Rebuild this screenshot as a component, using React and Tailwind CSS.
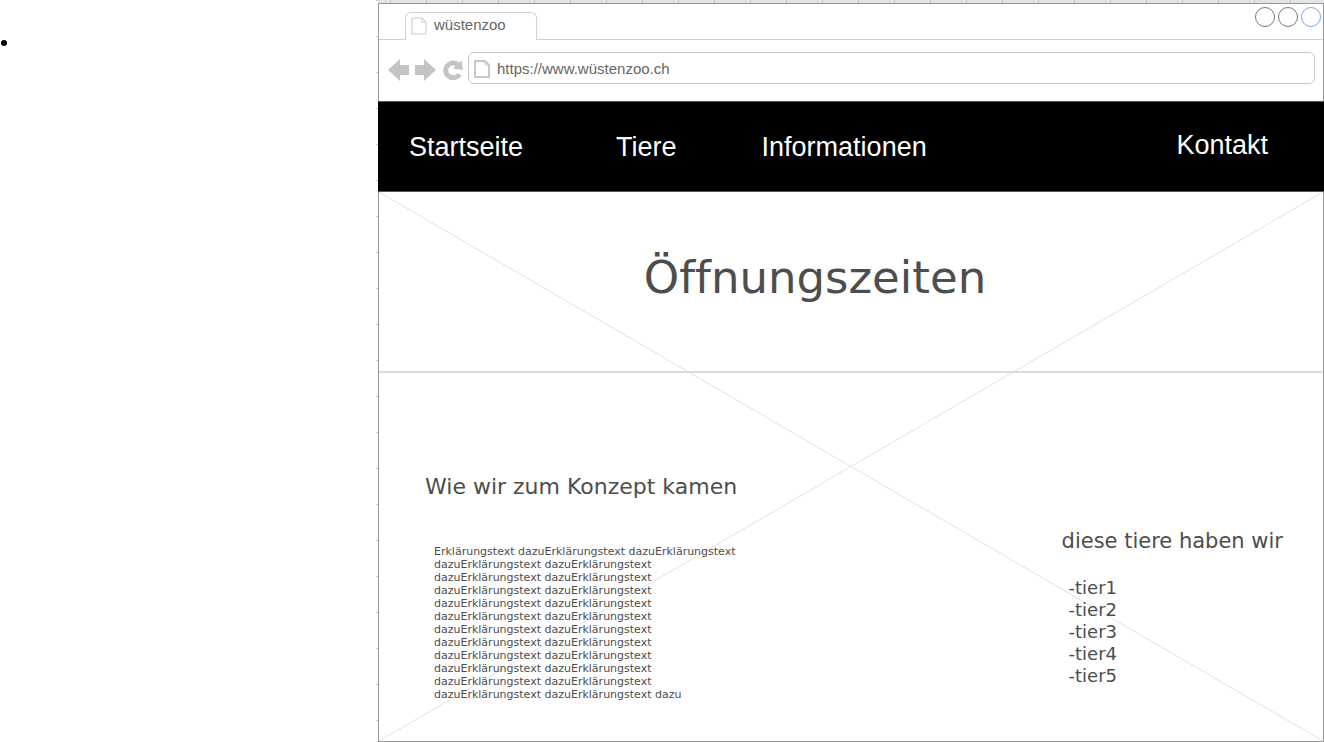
const EXPLANATION = 'Erklärungstext dazu'.repeat(25)

const NAV_LINKS = [
  { label: 'Startseite', place: 'ml-[31px]' },
  { label: 'Tiere', place: 'ml-[93px]' },
  { label: 'Informationen', place: 'ml-[85px]' },
  { label: 'Kontakt', place: 'ml-auto mr-14 pb-1' },
]

const ANIMALS = ['tier1', 'tier2', 'tier3', 'tier4', 'tier5']

function PageIcon({ className, strokeWidth }) {
  return (
    <svg className={className} viewBox="0 0 16 18" fill="none" stroke="#c8c8c8" strokeWidth={strokeWidth} aria-hidden="true">
      <path d="M1 1H11L15 5V17H1Z" />
      <path d="M11 1V5H15" strokeWidth="1" />
    </svg>
  )
}

function WindowButton({ label, color }) {
  return (
    <button type="button" aria-label={label} className={`size-5 rounded-full border bg-white ${color}`} />
  )
}

function TabBar() {
  return (
    <div className="flex h-9 justify-between">
      <div className="flex flex-1 items-end">
        <div className="w-[26px] border-b border-[#d0d0d0]" />
        <button
          type="button"
          className="flex h-7 w-[132px] items-center gap-[7px] rounded-t-md border border-b-0 border-[#d0d0d0] pb-1 pl-[5px] text-[15px] leading-5 text-[#666]"
        >
          <PageIcon className="mt-[3px] h-[18px] w-4" strokeWidth="1" />
          wüstenzoo
        </button>
        <div className="flex-1 border-b border-[#d0d0d0]" />
      </div>
      <div className="flex items-start gap-[3px] border-b border-[#d0d0d0] pt-[3px] pr-[2px]">
        <WindowButton label="Minimieren" color="border-[#777]" />
        <WindowButton label="Maximieren" color="border-[#777]" />
        <WindowButton label="Schliessen" color="border-[#7ba6f7]" />
      </div>
    </div>
  )
}

function AddressBar() {
  return (
    <div className="flex items-center pt-3 pr-2 pb-[17px] pl-[9px]">
      <button type="button" aria-label="Zurück" className="pt-[3px]">
        <svg className="h-[22px] w-[21px]" viewBox="0 0 21 22" fill="#c4c4c4" aria-hidden="true">
          <path d="M0 11L12 0V6H21V16H12V22Z" />
        </svg>
      </button>
      <button type="button" aria-label="Vorwärts" className="ml-[6px] pt-[3px]">
        <svg className="h-[22px] w-[21px]" viewBox="0 0 21 22" fill="#c4c4c4" aria-hidden="true">
          <path d="M21 11L9 0V6H0V16H9V22Z" />
        </svg>
      </button>
      <button type="button" aria-label="Neu laden" className="ml-[7px] pt-[3px]">
        <svg className="h-5 w-5" viewBox="0 0 20 20" aria-hidden="true">
          <path d="M16.5 14.2A7.400 7.400 0 1 1 14.400 4.300" fill="none" stroke="#c4c4c4" strokeWidth="5" />
          <path d="M18.500 0.500L20 10L9.800 8.500Z" fill="#c4c4c4" />
        </svg>
      </button>
      <label className="ml-[5px] flex h-8 flex-1 items-center gap-[7px] rounded-md border border-[#c8c8c8] pt-px pl-[5px]">
        <PageIcon className="h-[18px] w-4" strokeWidth="2" />
        <input
          type="text"
          aria-label="Adresse"
          defaultValue="https://www.wüstenzoo.ch"
          className="min-w-0 flex-1 bg-transparent text-[15px] leading-5 text-[#666] outline-none"
        />
      </label>
    </div>
  )
}

export default function App() {
  return (
    <div className="flex min-h-screen items-stretch bg-white font-['Liberation_Sans',Arial,sans-serif]">
      <aside className="w-[376px] shrink-0 pt-10">
        <div className="ml-px size-[6px] rounded-full bg-black" />
      </aside>
      <div className="w-[2px] shrink-0 bg-[repeating-linear-gradient(to_bottom,#d0d0d0_0_1px,transparent_1px_36px)]" />
      <div className="flex min-w-0 flex-1 flex-col">
        <div className="h-[3px] bg-[repeating-linear-gradient(to_right,#e4e4e4_0_12px,#c4c4c4_12px_13px,#e4e4e4_13px_36px)]" />
        <div className="flex flex-1 flex-col border border-[#999]">
          <header>
            <TabBar />
            <AddressBar />
          </header>
          <nav className="-mx-px flex h-[91px] items-center border-y border-[#555] bg-black text-[27px] leading-8 text-white">
            {NAV_LINKS.map(({ label, place }) => (
              <a key={label} href={`#${label.toLowerCase()}`} className={place}>
                {label}
              </a>
            ))}
          </nav>
          <main className="relative flex-1 font-['DejaVu_Sans',Verdana,sans-serif] text-[#4d4d4d]">
            <svg className="absolute inset-0 size-full" stroke="#e2e2e2" aria-hidden="true">
              <line x1="0" y1="0" x2="100%" y2="100%" />
              <line x1="0" y1="100%" x2="100%" y2="0" />
            </svg>
            <section className="relative flex h-[181px] justify-center border-b-2 border-[#dcdcdc] pt-[58px] pr-[72px]">
              <h1 className="text-[45px] leading-14 [font-variant-ligatures:none]">Öffnungszeiten</h1>
            </section>
            <div className="relative flex justify-between pr-10 pb-8 pl-[46px]">
              <section className="pt-[98px]">
                <h2 className="text-[22px] leading-8">Wie wir zum Konzept kamen</h2>
                <p className="mt-[42px] ml-[9px] w-[304px] text-[11px] leading-[13px]">{EXPLANATION}</p>
              </section>
              <section className="pt-[152px]">
                <h2 className="text-[21px] leading-8">diese tiere haben wir</h2>
                <ul className="mt-5 ml-[7px] text-[18px] leading-[22px]">
                  {ANIMALS.map((animal) => (
                    <li key={animal}>-{animal}</li>
                  ))}
                </ul>
              </section>
            </div>
          </main>
        </div>
      </div>
    </div>
  )
}
